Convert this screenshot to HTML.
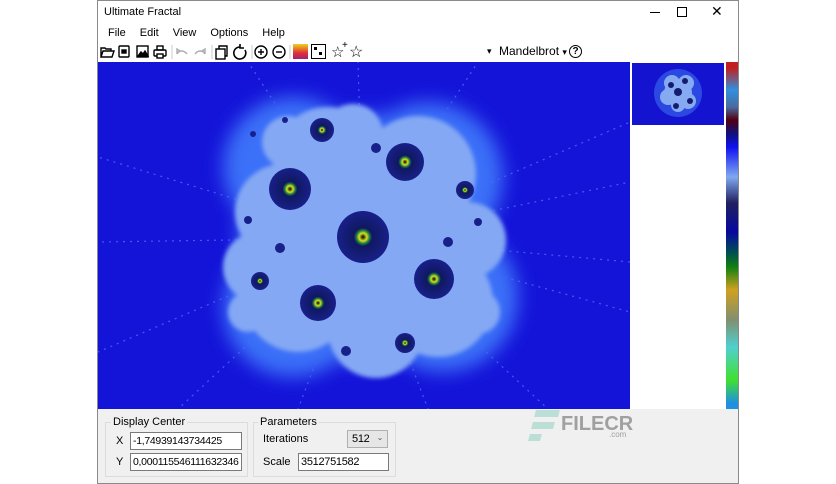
<!DOCTYPE html>
<html><head><meta charset="utf-8"><style>
*{margin:0;padding:0;box-sizing:border-box}
body{width:836px;height:484px;background:#fff;position:relative;overflow:hidden;font-family:"Liberation Sans",sans-serif;font-size:11px;color:#000}
.abs{position:absolute}
.win{left:97px;top:0;width:642px;height:484px;border:1px solid #8a8a8a;background:#fff}
.menu span{margin-right:14px}
.box{border:1px solid #dcdcdc;position:absolute}
.inp{position:absolute;background:#fff;border:1px solid #7a7a7a;height:18px;padding:2px 2px;font-size:10.5px;letter-spacing:-0.3px;white-space:nowrap;overflow:hidden}
</style></head><body>
<div class="abs win"></div>
<div class="abs" style="left:104px;top:6px;font-size:11px">Ultimate Fractal</div>
<div class="abs" style="left:650px;top:12px;width:10px;height:1px;background:#000"></div>
<div class="abs" style="left:677px;top:7px;width:10px;height:10px;border:1px solid #000"></div>
<div class="abs" style="left:711px;top:3px;font-size:14px">✕</div>
<div class="abs menu" style="left:108px;top:27px"><span>File</span><span>Edit</span><span>View</span><span>Options</span><span>Help</span></div>
<svg class="abs" style="left:0;top:43px" width="380" height="19" fill="none" stroke="#000" stroke-width="1.4">
<path d="M101 14V5h4l1 1h5v2M101 14l2-6h11l-2 6z"/>
<rect x="119" y="3" width="10" height="11" rx="1"/><rect x="122" y="7" width="4" height="3" fill="#000"/>
<rect x="137" y="3" width="11" height="11"/><path d="M138 13l3-4 2 2 2-3 3 5z" fill="#000"/>
<rect x="154" y="7" width="12" height="6" rx="1"/><rect x="157" y="3" width="6" height="4"/><rect x="157" y="11" width="6" height="4" fill="#fff"/>
<line x1="172" y1="2" x2="172" y2="16" stroke="#ccc" stroke-width="1"/>
<path d="M177 11c2-4 7-4 10 0M177 11V6l3 2" stroke="#aaa"/>
<path d="M205 11c-2-4-7-4-10 0M205 11V6l-3 2" stroke="#aaa"/>
<line x1="212" y1="2" x2="212" y2="16" stroke="#ccc" stroke-width="1"/>
<rect x="216" y="6" width="9" height="10"/><path d="M219 6V3h8v10h-2"/>
<path d="M240 4a6 6 0 1 0 5 3M240 1v4h4" stroke-width="1.6"/>
<line x1="252" y1="2" x2="252" y2="16" stroke="#ccc" stroke-width="1"/>
<circle cx="261" cy="9" r="6"/><path d="M258 9h6M261 6v6"/>
<circle cx="279" cy="9" r="6"/><path d="M276 9h6"/>
<line x1="290" y1="2" x2="290" y2="16" stroke="#ccc" stroke-width="1"/>
</svg>
<div class="abs" style="left:293px;top:44px;width:15px;height:15px;background:linear-gradient(#f0d020,#e03030 60%,#a02080)"></div>
<div class="abs" style="left:311px;top:44px;width:15px;height:15px;border:1.5px solid #000"><div class="abs" style="left:2px;top:2px;width:3px;height:3px;background:#000"></div><div class="abs" style="left:7px;top:7px;width:3px;height:3px;background:#000"></div></div>
<div class="abs" style="left:331px;top:43px;font-size:15px">☆</div><div class="abs" style="left:342px;top:40px;font-size:10px">+</div>
<div class="abs" style="left:349px;top:42px;font-size:16px">☆</div>
<div class="abs" style="left:487px;top:46px;font-size:9px">▾</div>
<div class="abs" style="left:499px;top:44px;font-size:12px">Mandelbrot <span style="font-size:9px">▾</span></div>
<div class="abs" style="left:569px;top:45px;width:13px;height:13px;border:1.4px solid #000;border-radius:50%;font-size:10px;text-align:center;line-height:11px;font-weight:bold">?</div>
<svg class="abs" style="left:98px;top:62px" width="532" height="347">
<defs>
<filter id="b"><feGaussianBlur stdDeviation="9"/></filter>
<filter id="b2"><feGaussianBlur stdDeviation="2"/></filter>
<radialGradient id="sp"><stop offset="0" stop-color="#000"/><stop offset=".15" stop-color="#d8e020"/><stop offset=".25" stop-color="#208040"/><stop offset=".35" stop-color="#101860"/><stop offset="1" stop-color="#18208a"/></radialGradient>
</defs>
<rect width="532" height="347" fill="#1414d8"/>
<g stroke="#5a78ff" stroke-width="1.2" stroke-dasharray="2 5" opacity=".7">
<path d="M265 176L0 95M265 176L532 250M265 176L150 0M265 176L380 0M265 176L532 60M265 176L0 290M265 176L200 347M265 176L330 347M265 176L532 120M265 176L0 180M265 176L260 0M265 176L532 200M265 176L80 347M265 176L450 347"/>
</g>
<g fill="#3a70f8" filter="url(#b)">
<circle cx="265" cy="176" r="125"/><circle cx="330" cy="115" r="75"/><circle cx="195" cy="245" r="70"/><circle cx="345" cy="235" r="75"/><circle cx="195" cy="105" r="70"/>
</g>
<g fill="#84a8f4" filter="url(#b2)">
<circle cx="265" cy="176" r="85"/><circle cx="230" cy="100" r="55"/><circle cx="320" cy="112" r="58"/><circle cx="185" cy="150" r="48"/><circle cx="200" cy="235" r="55"/><circle cx="340" cy="240" r="55"/><circle cx="278" cy="268" r="48"/><circle cx="160" cy="205" r="35"/><circle cx="370" cy="178" r="38"/><circle cx="255" cy="72" r="30"/><circle cx="190" cy="80" r="26"/><circle cx="150" cy="250" r="20"/><circle cx="380" cy="250" r="22"/></g>
<g fill="url(#sp)">
<circle cx="265" cy="175" r="26"/><circle cx="307" cy="100" r="19"/><circle cx="192" cy="127" r="21"/><circle cx="336" cy="217" r="20"/><circle cx="220" cy="241" r="18"/><circle cx="224" cy="68" r="12"/><circle cx="367" cy="128" r="9"/><circle cx="162" cy="219" r="9"/><circle cx="307" cy="281" r="10"/>
</g>
<g fill="#18208a"><circle cx="278" cy="86" r="5"/><circle cx="182" cy="186" r="5"/><circle cx="350" cy="180" r="5"/><circle cx="248" cy="289" r="5"/><circle cx="150" cy="158" r="4"/><circle cx="380" cy="160" r="4"/><circle cx="187" cy="58" r="3"/><circle cx="155" cy="72" r="3"/></g>
</svg>
<svg class="abs" style="left:632px;top:63px" width="92" height="62">
<rect width="92" height="62" fill="#1414d0"/>
<circle cx="46" cy="30" r="24" fill="#3a6af0" opacity=".6"/>
<g fill="#86aaf2"><circle cx="46" cy="30" r="14"/><circle cx="40" cy="20" r="8"/><circle cx="54" cy="20" r="8"/><circle cx="36" cy="34" r="8"/><circle cx="56" cy="38" r="8"/><circle cx="46" cy="42" r="7"/></g>
<g fill="#141c70"><circle cx="46" cy="29" r="4"/><circle cx="53" cy="18" r="3"/><circle cx="39" cy="22" r="3"/><circle cx="58" cy="38" r="3"/><circle cx="44" cy="43" r="3"/></g>
</svg>
<div class="abs" style="left:726px;top:62px;width:12px;height:347px;background:linear-gradient(#c02020 0px,#c02020 6px,#3090e0 28px,#4a6aa0 45px,#500010 58px,#101080 72px,#1010f0 85px,#80a8f0 115px,#202060 141px,#0808a0 170px,#005050 191px,#108010 205px,#d0a020 228px,#809070 258px,#50d0d0 285px,#40e030 318px,#2090e0 341px)"></div>
<div class="abs" style="left:98px;top:409px;width:640px;height:74px;background:#f0f0f0"></div>
<div class="box" style="left:105px;top:422px;width:143px;height:55px"></div>
<div class="abs" style="left:111px;top:416px;background:#f0f0f0;padding:0 2px">Display Center</div>
<div class="abs" style="left:116px;top:435px">X</div>
<div class="abs" style="left:116px;top:456px">Y</div>
<div class="inp" style="left:130px;top:432px;width:112px">-1,74939143734425</div>
<div class="inp" style="left:130px;top:453px;width:112px">0,000115546111632346</div>
<div class="box" style="left:253px;top:422px;width:143px;height:55px"></div>
<div class="abs" style="left:258px;top:416px;background:#f0f0f0;padding:0 2px">Parameters</div>
<div class="abs" style="left:263px;top:433px">Iterations</div>
<div class="abs" style="left:263px;top:456px">Scale</div>
<div class="inp" style="left:347px;top:430px;width:41px;background:#e6e6e6;border-color:#b0b0b0;font-size:11px;padding:2px 4px">512 <span style="float:right;font-size:8px;color:#555">⌄</span></div>
<div class="inp" style="left:298px;top:453px;width:91px;font-size:11px">3512751582</div>
<div class="abs" style="left:527px;top:410px;width:36px;height:40px;opacity:.35">
<div class="abs" style="left:8px;top:0;width:24px;height:7px;background:#5cc0a8;transform:skewX(-15deg)"></div>
<div class="abs" style="left:5px;top:12px;width:22px;height:7px;background:#5cc0a8;transform:skewX(-15deg)"></div>
<div class="abs" style="left:2px;top:24px;width:12px;height:7px;background:#5cc0a8;transform:skewX(-15deg)"></div></div>
<div class="abs" style="left:561px;top:413px;font-size:20px;font-weight:bold;color:#a0a0a0">FILECR</div>
<div class="abs" style="left:609px;top:430px;font-size:8px;color:#a0a0a0">.com</div>
</body></html>
